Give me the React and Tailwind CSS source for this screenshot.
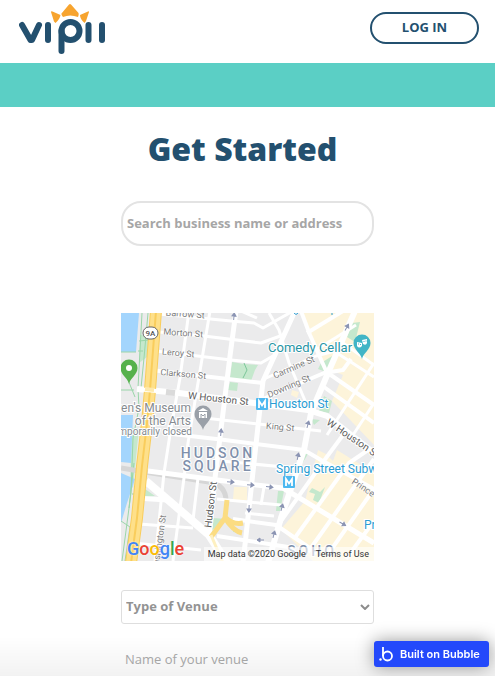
const BLOCKS = [
    "M182 0 L253 0 L253 132 L211 88 L222 62 L205 55 L196 38 Z",
    "M197 137 L205 141 L212 148 L216 137 L253 160 L253 248 L192 248 L160 216 L184 188 Z",
    "M171 77 l7 2 l-2 6 l-6 -3 Z",
    "M113 174 h13 v13 h-14 Z",
];

const PARKS = [
    "M111 49 L123 51 L137 52 L134 57 L130 68 L109 65 Z",
    "M109 69 l8 1 l-1 8 l-9 -1 Z",
    "M231 10 l8 -1 l-5 20 l-8 -5 Z",
    "M200 50 L216 40 L213 52 L208 60 L197 56 Z",
    "M203 83 l8 5 l-3 12 l-10 -2 Z",
    "M190 106 l9 1 l-6 5 Z",
    "M191 175 l8 4 l5 -5 l-6 16 l-6 -3 l2 -6 l-6 -2 Z",
    "M157 178 h6 l-4 20 h-4 Z",
    "M182 140 l5 1 l-9 15 Z",
    "M19 22 l9 0 l-2 22 l-8 6 Z",
    "M11 115 l7 0 l-6 60 l-3 -4 Z",
    "M92 205 l14 1 l-16 12 Z",
    "M24 176 l10 7 l-12 1 Z",
    "M112 215 l8 5 l-8 -1 Z",
];

// [path, stroke width]
const ROADS = [
    ["M68 -2 L59 65 L50 115 L43 160 L34 248", 3],
    ["M89 -2 L67 130 L63 165 L52 248", 3],
    ["M115 -2 L109 43 L94 165 L88 225", 5],
    ["M77 165 L72 207", 3],
    ["M174 -2 L142 68 L137 113 L122 250", 5],
    ["M234 -2 L207 60 L190 100 L183 137 L160 205 L147 250", 6],
    ["M38 1 L110 8 L133 10 L142 15 L172 -2", 3],
    ["M38 19 L83 23 L140 30 L162 22", 3],
    ["M35 38 L110 47 L140 50 L152 43", 3],
    ["M30 57 L142 70", 4],
    ["M16 76 L58 80 L133 90 L187 97 L206 103 L253 140", 6],
    ["M83 105 L200 118", 3],
    ["M43 120 L104 127 L183 137 L200 147 L253 176", 4],
    ["M100 148 L174 155", 3],
    ["M27 158 L127 171 L162 175 L253 230", 5],
    ["M96 186 L160 192", 3],
    ["M124 200 L153 203", 3],
    ["M143 174 L140 192", 3],
    ["M112 206 L155 212 L196 240", 4],
    ["M14 185 L47 187", 5],
    ["M18 211 L72 215", 3],
    ["M13 230 L80 237", 3],
    ["M96 223 L174 235", 4],
    ["M25 168 L88 222 L106 250", 8],
    ["M120 -2 L136 5", 3],
    ["M148 0 L158 17 L168 50 L188 97", 3],
    ["M180 -2 L189 22 L206 60", 4],
    ["M186 20 L222 -2", 4],
    ["M195 37 L235 12", 3],
    ["M143 66 L195 43 L214 38", 3],
    ["M142 86 L203 60 L222 57 L230 46", 4],
    ["M222 30 L253 52", 3],
    ["M216 40 L253 64", 3],
    ["M207 60 L253 92", 4],
    ["M203 74 L253 110", 4],
    ["M253 50 L206 122", 3],
    ["M253 90 L232 122", 3],
    ["M155 215 L205 145 L222 122", 4],
    ["M173 226 L228 150 L250 135", 4],
    ["M187 239 L253 146", 4],
    ["M205 244 L253 176", 4],
    ["M225 246 L253 208", 4],
];

const STREETS = [
    { name: "Barrow St", x: 64, y: 4, angle: 4 },
    { name: "Morton St", x: 62, y: 23, angle: 4 },
    { name: "Leroy St", x: 57, y: 43, angle: 5 },
    { name: "Clarkson St", x: 62, y: 64, angle: 5 },
    { name: "Carmine St", x: 174, y: 57, angle: -23 },
    { name: "Downing St", x: 169, y: 76, angle: -23 },
    { name: "King St", x: 159, y: 117, angle: 5 },
    { name: "Prince St", x: 245, y: 180, angle: 34 },
    { name: "Washington St", x: 41, y: 231, angle: -82 },
];

const ARROWS = [
    [113, 3, -85], [100, 119, -85], [226, 14, -60], [187, 111, -75],
    [177, 143, -78], [110, 169, 5], [130, 172, 5], [149, 174, 8],
    [128, 196, 92], [161, 194, -75], [153, 221, -75], [222, 211, 30], [139, 227, 180],
];

const HIGHWAY = "M35 -2 L29 77 L26 110 L21 153 L16 205 L10 250";

function Pin({ x, y, color, children }) {
    return (
        <g transform={`translate(${x} ${y})`}>
            <path
                d="M0 16 C-1 10 -8.500 7 -8.500 0 A8.500 8.500 0 0 1 8.500 0 C8.500 7 1 10 0 16 Z"
                fill={color}
            />
            {children}
        </g>
    );
}

function Metro({ x, y }) {
    return (
        <g transform={`translate(${x} ${y})`}>
            <rect width="12" height="12" rx="1" fill="#4db8f0" />
            <path d="M3 10 V3 L6 7.500 L9 3 V10" fill="none" stroke="#fff" strokeWidth="1.800" />
        </g>
    );
}

function StreetMap() {
    return (
        <svg
            viewBox="0 0 253 248"
            className="block w-full h-auto font-['Roboto',sans-serif]"
            role="img"
            aria-label="Map of Hudson Square"
        >
            <rect width="253" height="248" fill="#ebebec" />
            {BLOCKS.map((d) => (
                <path key={d} d={d} fill="#fdf4da" />
            ))}
            {PARKS.map((d) => (
                <path key={d} d={d} fill="#c5e8cd" />
            ))}
            <path d="M0 0 H18 L15 39 H0 Z M0 102 H12 L10 150 L0 149 Z M0 160 L14 166 L6 190 L0 210 Z" fill="#a3d5fd" />
            <path
                d="M21 0 L17 75 L18 95 L12 125 L10 180 L1 248 M27 0 L23 45 L20 75 M17 38 L22 38 M18 28 L28 27 M0 39 L15 39 M0 77 L13 77 M5 62 L14 84 M13 150 L8 195 M11 181 L17 181 M0 208 L9 214 L4 248"
                fill="none"
                stroke="#9ad6a9"
                strokeWidth="1"
            />
            <path
                d="M0 155 L24 159 L88 169 Q105 172 105 188"
                fill="none"
                stroke="#d6d6d6"
                strokeWidth="5"
            />
            <g fill="none" stroke="#fff" strokeLinejoin="round">
                {ROADS.map(([d, width]) => (
                    <path key={d} d={d} strokeWidth={width} />
                ))}
            </g>
            <g fill="none" strokeLinejoin="round">
                <path d={HIGHWAY} stroke="#f9cd5c" strokeWidth="12" />
                <path d={HIGHWAY} stroke="#fee08a" strokeWidth="10" />
                <path d={HIGHWAY} stroke="#f9cd5c" strokeWidth="2" />
                <path d="M106 187 L104 205 L90 224 M104 205 Q112 218 121 220 M105 205 Q112 212 122 210" stroke="#fbdc82" strokeWidth="5" />
                <path d="M90 222 L102 250" stroke="#fef0c0" strokeWidth="3" />
            </g>
            <path d="M16 76 L45 79" stroke="#fff" strokeWidth="4" />
            <path d="M24 76 L33 77" stroke="#fee9ac" strokeWidth="4" />
            <path d="M45 79 L54 80" stroke="#dadada" strokeWidth="6" />
            <path d="M123 50 l3 7 l-4 8" fill="none" stroke="#7cc79a" strokeWidth="1" />

            {ARROWS.map(([x, y, angle]) => (
                <path
                    key={`${x}-${y}`}
                    d="M-4 0 H2 M0 -2 L3 0 L0 2 Z"
                    transform={`translate(${x} ${y}) rotate(${angle})`}
                    fill="#8b94b3"
                    stroke="#8b94b3"
                    strokeWidth="1"
                />
            ))}

            <g textAnchor="middle" stroke="#fff" strokeWidth="2" paintOrder="stroke" strokeLinejoin="round">
                <g fill="#7b7b7b" fontSize="9" strokeWidth="1">
                    {STREETS.map(({ name, x, y, angle }) => (
                        <text key={name} x={x} y={y} transform={`rotate(${angle} ${x} ${y})`}>
                            {name}
                        </text>
                    ))}
                </g>
                <g fill="#5c5c5c" fontSize="10">
                    <text x="97" y="89" transform="rotate(6 97 89)">W Houston St</text>
                    <text x="230" y="128" transform="rotate(34 230 128)">W Houston St</text>
                    <text x="93" y="192" transform="rotate(-83 93 192)">Hudson St</text>
                </g>
                <g fill="#8090ab" fontSize="14" fontWeight="500" className="tracking-[3px]">
                    <text x="97" y="145">HUDSON</text>
                    <text x="97" y="158">SQUARE</text>
                    <text x="191" y="243">SOHO</text>
                </g>
            </g>

            <g fill="#858b91" fontSize="12" textAnchor="end" stroke="#fff" strokeWidth="2" paintOrder="stroke">
                <text x="70" y="99">Children's Museum</text>
                <text x="70" y="112">of the Arts</text>
                <text x="71" y="122" fontSize="10">Temporarily closed</text>
            </g>

            <g fill="#2795a5" fontSize="13" stroke="#fff" strokeWidth="2" paintOrder="stroke">
                <text x="147" y="39">Comedy Cellar</text>
                <g fill="#2a9cd3" fontSize="12">
                    <text x="148" y="95">Houston St</text>
                    <text x="155" y="160">Spring Street Subway</text>
                    <text x="243" y="216">Prince St</text>
                </g>
            </g>
            <path d="M173 0 q2 3 4 0 M211 0 v2" fill="none" stroke="#2a9cd3" strokeWidth="1" />

            <Pin x={8} y={55} color="#56b14c">
                <circle r="3" fill="#fff" />
            </Pin>
            <Pin x={82} y={101} color="#9aa0a8">
                <path d="M-5 -3 L0 -6 L5 -3 Z M-4 -2 H4 V4 H-4 Z" fill="#fff" />
                <path d="M-2 4 V0 L0 2 L2 0 V4" fill="none" stroke="#9aa0a8" strokeWidth="1" />
            </Pin>
            <Pin x={241} y={30} color="#42b5c6">
                <path d="M-5 -1 L0 0 V3 Q-3 6 -5 3 Z M0 -3 L5 -4 V0 Q4 3 1 1 Z" fill="#fff" />
                <path d="M-4 1 h1 M-2 1.500 h1 M1.500 -1.500 h1 M3.500 -2 h1" stroke="#42b5c6" strokeWidth="1" />
            </Pin>
            <Metro x={135} y={85} />
            <Metro x={162} y={163} />

            <rect x="22" y="14" width="15" height="12" rx="6" fill="#fff" stroke="#666" />
            <text x="29.500" y="23" fontSize="8" fontWeight="500" fill="#555" textAnchor="middle">9A</text>
        </svg>
    );
}

function GoogleLogo() {
    return (
        <span className="text-[18px] leading-6 font-medium font-['Roboto',sans-serif] [text-shadow:0_0_2px_white]">
            <span className="text-[#4285f4]">G</span>
            <span className="text-[#ea4335]">o</span>
            <span className="text-[#fbbc05]">o</span>
            <span className="text-[#4285f4]">g</span>
            <span className="text-[#34a853]">l</span>
            <span className="text-[#ea4335]">e</span>
        </span>
    );
}

function Logo() {
    return (
        <svg viewBox="0 0 87 50" className="w-[87px] h-[50px]" role="img" aria-label="vipii">
            <path
                d="M50 0.500 Q51 -0.500 52 0.500 L59.500 9 Q60 11 59 13 Q51 10 44 13 Q42 11 42.500 9.500 Z M32 8 Q32 7 33.500 7.500 L41.500 11 Q41 15 36.500 19 L35 17.500 Z M70 8 Q70 7 69 7.500 L61 11 Q61 15 65.500 19 L67 17 Z"
                fill="#f7a42f"
            />
            <g fill="none" stroke="#23506f" strokeWidth="6" strokeLinecap="round" strokeLinejoin="round">
                <path d="M3 21 L11.500 36 H13 L20 21" />
                <path d="M29 21 V36" />
                <path d="M42.500 47 V27" />
                <circle cx="51.500" cy="27" r="9" />
                <path d="M69.500 21 V36" />
                <path d="M83 21 V36" />
            </g>
        </svg>
    );
}

function Header() {
    return (
        <header>
            <div className="flex items-start justify-between h-[63px] pl-[19px] pr-4">
                <a href="/" className="mt-1">
                    <Logo />
                </a>
                <button className="mt-3 h-8 w-[109px] rounded-full border-2 border-[#23506f] text-[13px] font-bold text-[#23506f]">
                    LOG IN
                </button>
            </div>
            <div className="h-11 bg-[#5bcfc5]" />
        </header>
    );
}

function App() {
    return (
        <div className="min-h-screen bg-white font-['Open_Sans',sans-serif]">
            <Header />
            <main className="mx-auto w-full max-w-[253px]">
                <h1 className="pt-5 pr-2.5 text-center text-[32px] leading-11 font-extrabold whitespace-nowrap text-[#23506f]">
                    Get Started
                </h1>
                <input
                    type="text"
                    aria-label="Search business name or address"
                    placeholder="Search business name or address"
                    className="mt-[30px] block h-[45px] w-full rounded-[20px] border-2 border-[#e3e3e3] px-1 pb-0.5 text-[13px] font-bold placeholder:text-[#a6a6a6]"
                />
                <div className="relative mt-[67px] overflow-hidden">
                    <StreetMap />
                    <div className="absolute inset-x-0 bottom-0 flex items-end justify-between pl-1.5">
                        <GoogleLogo />
                        <div className="flex gap-2.5 bg-white/60 pr-[5px] pl-1 text-[9px] leading-3.5 text-[#333] font-['Roboto',sans-serif]">
                            <span>Map data ©2020 Google</span>
                            <a href="/terms">Terms of Use</a>
                        </div>
                    </div>
                </div>
                <div className="relative mt-[29px]">
                    <select
                        aria-label="Type of Venue"
                        className="block h-[34px] w-full appearance-none rounded-[3px] border border-[#dedede] bg-white px-1 text-[13px] font-bold text-[#939393]"
                    >
                        <option>Type of Venue</option>
                        <option>Restaurant</option>
                        <option>Bar</option>
                    </select>
                    <svg viewBox="0 0 10 6" className="pointer-events-none absolute top-3.5 right-1 w-2.5" fill="none">
                        <path d="M1 1 L5 5 L9 1" stroke="#8c8c8c" strokeWidth="2" />
                    </svg>
                </div>
                <input
                    type="text"
                    aria-label="Name of your venue"
                    placeholder="Name of your venue"
                    className="mt-[18px] block h-[34px] w-full px-1 text-[13px] placeholder:text-[#ababab]"
                />
            </main>
            <div className="pointer-events-none fixed inset-x-0 bottom-0 h-10 bg-linear-to-t from-black/5 to-transparent" />
            <a
                href="/bubble"
                className="fixed right-1.5 bottom-[9px] flex h-[26px] w-[115px] items-center gap-1.5 rounded-[3px] bg-[#2449fb] pl-[5px] text-[11px] font-semibold whitespace-nowrap text-white shadow-[0_0_18px_rgba(0,0,0,0.4)] font-['Inter',sans-serif]"
            >
                <svg viewBox="0 0 15 16" className="w-[15px]" fill="none">
                    <circle cx="1.500" cy="13.500" r="1.200" fill="#fff" />
                    <path d="M4 1 V10" stroke="#fff" strokeWidth="1.800" />
                    <circle cx="8.500" cy="10" r="4.500" stroke="#fff" strokeWidth="1.800" />
                </svg>
                Built on Bubble
            </a>
        </div>
    );
}

export default App;
